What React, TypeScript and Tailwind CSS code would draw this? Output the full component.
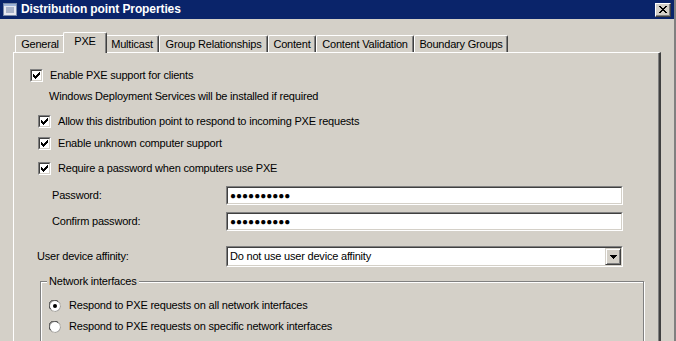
import React from "react";

const font = { fontFamily: '"Liberation Sans", Arial, sans-serif' };

function CheckBox() {
  return (
    <div className="h-[13px] w-[13px] shrink-0 border border-t-[#808080] border-l-[#808080] border-b-white border-r-white">
      <div className="flex h-full w-full items-center justify-center border border-t-[#404040] border-l-[#404040] border-b-[#d4d0c8] border-r-[#d4d0c8] bg-white">
        <svg width="7" height="7" viewBox="0 0 7 7" shapeRendering="crispEdges">
          <path d="M0 2h1v3H0zM1 3h1v3H1zM2 4h1v3H2zM3 3h1v3H3zM4 2h1v3H4zM5 1h1v3H5zM6 0h1v3H6z" fill="#000" />
        </svg>
      </div>
    </div>
  );
}

function CheckRow({ indent, label, mt }: { indent: string; label: string; mt: string }) {
  return (
    <div className={`flex h-[13px] items-center gap-[7px] ${indent} ${mt}`}>
      <CheckBox />
      <span className="whitespace-nowrap">{label}</span>
    </div>
  );
}

function Radio({ on }: { on: boolean }) {
  return (
    <svg width="12" height="12" viewBox="0 0 12 12" className="shrink-0">
      <circle cx="6" cy="6" r="5.5" fill="#fff" stroke="#808080" strokeWidth="1" />
      <path d="M1.5 9 A5 5 0 0 1 9 1.5" fill="none" stroke="#404040" strokeWidth="1" />
      <path d="M10.5 3 A5 5 0 0 1 3 10.5" fill="none" stroke="#d4d0c8" strokeWidth="1" />
      {on && <circle cx="6" cy="6" r="2" fill="#000" />}
    </svg>
  );
}

function Sunken({ children, className }: { children?: React.ReactNode; className?: string }) {
  return (
    <div className={`border border-t-[#808080] border-l-[#808080] border-b-white border-r-white ${className ?? ""}`}>
      <div className="flex h-full w-full items-center border border-t-[#404040] border-l-[#404040] border-b-[#d4d0c8] border-r-[#d4d0c8] bg-white">
        {children}
      </div>
    </div>
  );
}

function Tab({ label, w, selected }: { label: string; w: string; selected?: boolean }) {
  if (selected) {
    return (
      <div className={`relative z-10 -mx-[2px] -mb-px flex h-[21px] ${w} shrink-0 justify-center whitespace-nowrap rounded-t-[2px] border-l border-t border-r border-l-white border-t-white border-r-[#404040] bg-[#d4d0c8] pt-[2px] shadow-[inset_-1px_0_0_#808080]`}>
        {label}
      </div>
    );
  }
  return (
    <div className={`flex h-[17px] ${w} shrink-0 justify-center whitespace-nowrap rounded-t-[2px] border-l border-t border-r border-l-white border-t-white border-r-[#404040] pt-[2px] shadow-[inset_-1px_0_0_#808080]`}>
      {label}
    </div>
  );
}

export default function App() {
  return (
    <div
      className="h-[341px] w-[676px] overflow-hidden border-r-2 border-r-[#808080] bg-[#d4d0c8] text-[11px] leading-[13px] tracking-[-0.2px] text-black"
      style={font}
    >
      {/* title bar */}
      <div className="flex h-[19px] items-center bg-[#0a246a] pl-[3px] pr-[3px]">
        <svg width="14" height="13" viewBox="0 0 14 13" className="shrink-0">
          <rect x="0.5" y="0.5" width="13" height="12" fill="#e8e8f0" stroke="#7a8aa8" />
          <rect x="1" y="1" width="12" height="2" fill="#9fb4d8" />
          <path d="M3 5h8M3 7h8M3 9h8" stroke="#6d7fa3" strokeWidth="1" />
        </svg>
        <span className="ml-[4px] text-[12px] font-bold tracking-[-0.1px] text-white">Distribution point Properties</span>
        <div className="ml-auto flex h-[14px] w-[16px] items-center justify-center border border-t-white border-l-white border-b-[#404040] border-r-[#404040] bg-[#d4d0c8] shadow-[inset_-1px_-1px_0_#808080]">
          <svg width="8" height="7" viewBox="0 0 8 7" shapeRendering="crispEdges">
            <path d="M0 0h2v1h1v1h2V1h1V0h2v1H7v1H6v1H5v1h1v1h1v1h1v1H6V6H5V5H3v1H2v1H0V6h1V5h1V4h1V3H2V2H1V1H0z" fill="#000" />
          </svg>
        </div>
      </div>

      {/* tabs */}
      <div className="mt-[13px] flex h-[20px] items-end pl-[15px]">
        <Tab label="General" w="w-[50px]" />
        <Tab label="PXE" w="w-[44px]" selected />
        <Tab label="Multicast" w="w-[54px]" />
        <Tab label="Group Relationships" w="w-[109px]" />
        <Tab label="Content" w="w-[48px]" />
        <Tab label="Content Validation" w="w-[98px]" />
        <Tab label="Boundary Groups" w="w-[94px]" />
      </div>

      {/* panel */}
      <div className="ml-[13px] h-[300px] w-[648px] border-l border-t border-r-2 border-l-white border-t-white border-r-[#404040] pl-[16px] pt-[16px] shadow-[inset_-1px_0_0_#808080]">
        <CheckRow indent="" label="Enable PXE support for clients" mt="" />
        <div className="ml-[19px] mt-[8px] h-[13px] whitespace-nowrap">
          Windows Deployment Services will be installed if required
        </div>
        <CheckRow indent="ml-[8px]" label="Allow this distribution point to respond to incoming PXE requests" mt="mt-[12px]" />
        <CheckRow indent="ml-[8px]" label="Enable unknown computer support" mt="mt-[9px]" />
        <CheckRow indent="ml-[8px]" label="Require a password when computers use PXE" mt="mt-[12px]" />

        <div className="mt-[11px] flex items-center">
          <span className="ml-[22px] w-[174px]">Password:</span>
          <Sunken className="h-[19px] w-[397px]">
            <span className="pl-[2px] text-[10px] tracking-[0px]">●●●●●●●●●●</span>
          </Sunken>
        </div>
        <div className="mt-[7px] flex items-center">
          <span className="ml-[22px] w-[174px]">Confirm password:</span>
          <Sunken className="h-[19px] w-[397px]">
            <span className="pl-[2px] text-[10px] tracking-[0px]">●●●●●●●●●●</span>
          </Sunken>
        </div>

        <div className="mt-[15px] flex items-center">
          <span className="ml-[7px] w-[189px]">User device affinity:</span>
          <Sunken className="h-[21px] w-[397px]">
            <span className="flex-1 pl-[2px]">Do not use user device affinity</span>
            <div className="flex h-[17px] w-[16px] items-center justify-center border border-t-[#d4d0c8] border-l-[#d4d0c8] border-b-[#404040] border-r-[#404040] bg-[#d4d0c8] shadow-[inset_1px_1px_0_#fff,inset_-1px_-1px_0_#808080]">
              <svg width="7" height="4" viewBox="0 0 7 4" shapeRendering="crispEdges">
                <path d="M0 0h7v1H6v1H5v1H4v1H3V3H2V2H1V1H0z" fill="#000" />
              </svg>
            </div>
          </Sunken>
        </div>

        {/* group box */}
        <div className="relative ml-[10px] mt-[14px] h-[80px] w-[604px] border border-[#808080] shadow-[inset_1px_1px_0_#fff,1px_1px_0_#fff]">
          <span className="absolute -top-[7px] left-[6px] bg-[#d4d0c8] px-[2px]">Network interfaces</span>
          <div className="ml-[8px] mt-[17px] flex h-[13px] items-center gap-[8px]">
            <Radio on />
            <span className="whitespace-nowrap">Respond to PXE requests on all network interfaces</span>
          </div>
          <div className="ml-[8px] mt-[8px] flex h-[13px] items-center gap-[8px]">
            <Radio on={false} />
            <span className="whitespace-nowrap">Respond to PXE requests on specific network interfaces</span>
          </div>
        </div>
      </div>
    </div>
  );
}
